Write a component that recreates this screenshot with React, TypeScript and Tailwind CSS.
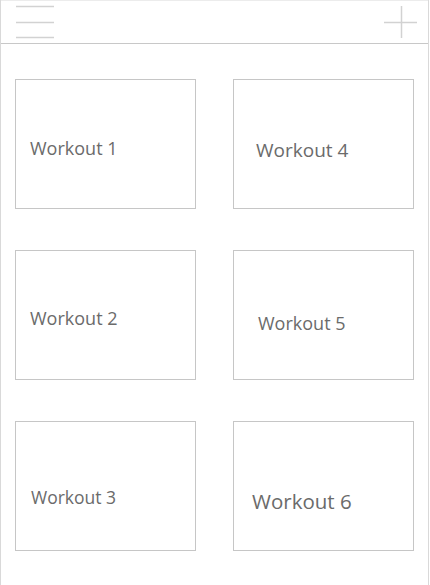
const workouts = [
  { name: 'Workout 1', cls: 'pl-[14px] pt-[59px] text-[18px]' },
  { name: 'Workout 4', cls: 'pl-[22px] pt-[61px] text-[19px]' },
  { name: 'Workout 2', cls: 'pl-[14px] pt-[58px] text-[18px]' },
  { name: 'Workout 5', cls: 'pl-[24px] pt-[63px] text-[18px]' },
  { name: 'Workout 3', cls: 'pl-[15px] pt-[67px] text-[17.5px]' },
  { name: 'Workout 6', cls: 'pl-[18px] pt-[69px] text-[20.5px]' },
];

const order = [0, 1, 2, 3, 4, 5];

export default function App() {
  return (
    <div
      className="w-[429px] h-[585px] bg-white border-l border-r border-[#d9d9d9]"
      style={{ fontFamily: '"Open Sans", "Noto Sans", sans-serif' }}
    >
      <header className="h-[44px] border-t border-b border-t-[#ececec] border-b-[#c8c8c8] flex items-start justify-between">
        <svg width="54" height="42" viewBox="0 0 54 42" className="ml-[14px]">
          <line x1="1" y1="5.5" x2="39" y2="5.5" stroke="#d2d2d2" strokeWidth="1.5" />
          <line x1="1" y1="21.5" x2="39" y2="21.5" stroke="#d2d2d2" strokeWidth="1.5" />
          <line x1="1" y1="36.5" x2="39" y2="36.5" stroke="#d2d2d2" strokeWidth="1.5" />
        </svg>
        <svg width="36" height="42" viewBox="0 0 36 42" className="mr-[8px]">
          <line x1="0" y1="21.5" x2="33" y2="21.5" stroke="#d2d2d2" strokeWidth="1.5" />
          <line x1="17.5" y1="5" x2="17.5" y2="37" stroke="#d2d2d2" strokeWidth="1.5" />
        </svg>
      </header>

      <div className="grid grid-cols-[181px_181px] gap-x-[37px] gap-y-[41px] pl-[14px] pt-[35px]">
        {order.map((i) => (
          <div
            key={workouts[i].name}
            className={`h-[130px] border border-[#c6c6c6] text-[#6b6b6b] leading-none ${workouts[i].cls}`}
          >
            {workouts[i].name}
          </div>
        ))}
      </div>
    </div>
  );
}
